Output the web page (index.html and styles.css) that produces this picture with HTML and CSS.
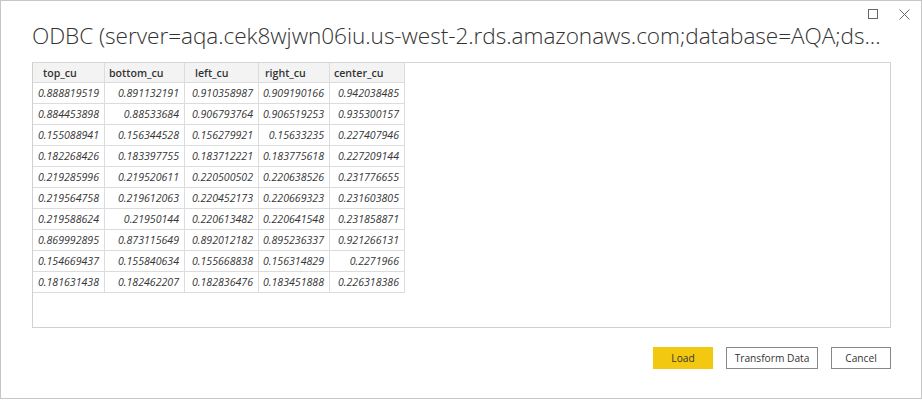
FILE: index.html
```html
<!DOCTYPE html>
<html lang="en">
<head>
<meta charset="utf-8">
<title>ODBC</title>
<link rel="stylesheet" href="styles.css">
</head>
<body>
<div class="dialog">
  <div class="controls">
    <svg class="ctl" width="10" height="10" viewBox="0 0 10 10"><rect x="0.5" y="0.5" width="9" height="9" fill="none" stroke="#666" stroke-width="1"/></svg>
    <svg class="ctl" width="11" height="11" viewBox="0 0 11 11"><path d="M0.5 0.5 L10.5 10.5 M10.5 0.5 L0.5 10.5" stroke="#666" stroke-width="1" fill="none"/></svg>
  </div>
  <div class="title">ODBC (server=aqa.cek8wjwn06iu.us-west-2.rds.amazonaws.com;database=AQA;ds...</div>
  <div class="preview">
    <div class="grid">
      <div class="th p1">top_cu</div>
      <div class="th p2">bottom_cu</div>
      <div class="th p3">left_cu</div>
      <div class="th p4">right_cu</div>
      <div class="th p5">center_cu</div>

      <div class="td">0.888819519</div><div class="td">0.891132191</div><div class="td">0.910358987</div><div class="td">0.909190166</div><div class="td">0.942038485</div>
      <div class="td">0.884453898</div><div class="td">0.88533684</div><div class="td">0.906793764</div><div class="td">0.906519253</div><div class="td">0.935300157</div>
      <div class="td">0.155088941</div><div class="td">0.156344528</div><div class="td">0.156279921</div><div class="td">0.15633235</div><div class="td">0.227407946</div>
      <div class="td">0.182268426</div><div class="td">0.183397755</div><div class="td">0.183712221</div><div class="td">0.183775618</div><div class="td">0.227209144</div>
      <div class="td">0.219285996</div><div class="td">0.219520611</div><div class="td">0.220500502</div><div class="td">0.220638526</div><div class="td">0.231776655</div>
      <div class="td">0.219564758</div><div class="td">0.219612063</div><div class="td">0.220452173</div><div class="td">0.220669323</div><div class="td">0.231603805</div>
      <div class="td">0.219588624</div><div class="td">0.21950144</div><div class="td">0.220613482</div><div class="td">0.220641548</div><div class="td">0.231858871</div>
      <div class="td">0.869992895</div><div class="td">0.873115649</div><div class="td">0.892012182</div><div class="td">0.895236337</div><div class="td">0.921266131</div>
      <div class="td">0.154669437</div><div class="td">0.155840634</div><div class="td">0.155668838</div><div class="td">0.156314829</div><div class="td">0.2271966</div>
      <div class="td">0.181631438</div><div class="td">0.182462207</div><div class="td">0.182836476</div><div class="td">0.183451888</div><div class="td">0.226318386</div>
    </div>
  </div>
  <div class="footer">
    <button class="btn primary">Load</button>
    <button class="btn">Transform Data</button>
    <button class="btn">Cancel</button>
  </div>
</div>
</body>
</html>
```

FILE: styles.css
```css
* { box-sizing: border-box; }
html, body { margin: 0; padding: 0; background: #fff; }
body { font-family: "Open Sans", "Noto Sans", sans-serif; }

.dialog {
  width: 922px;
  height: 399px;
  border: 1px solid #c6c6c6;
  background: #fff;
  display: flex;
  flex-direction: column;
}

.controls {
  display: flex;
  justify-content: flex-end;
  align-items: flex-start;
  gap: 21px;
  padding: 8px 11px 0 0;
  height: 19px;
}
.ctl { display: block; }

.title {
  margin: 1px 0 0 31px;
  font-size: 22.6px;
  font-weight: 300;
  color: #333;
  line-height: 30px;
  height: 30px;
  white-space: nowrap;
  letter-spacing: -0.05px;
}

.preview {
  margin: 11px 30px 0 31px;
  height: 266px;
  border: 1px solid #d0d0d0;
  border-top-color: #d6d6d6;
}

.grid {
  display: grid;
  grid-template-columns: 72px 80px 74px 71px 75px;
  width: 372px;
}

.th, .td {
  height: 21px;
  border-right: 1px solid #dcdcdc;
  border-bottom: 1px solid #dcdcdc;
  display: flex;
  align-items: center;
  white-space: nowrap;
  font-size: 10.6px;
}

.th {
  height: 20px;
  background: #f3f3f3;
  font-weight: 600;
  color: #333;
}
.p1 { padding-left: 10px; }
.p2 { padding-left: 4px; }
.p3 { padding-left: 10px; }
.p4 { padding-left: 6px; }
.p5 { padding-left: 4px; }

.td {
  justify-content: flex-end;
  padding-right: 5px;
  font-style: italic;
  color: #363636;
}

.footer {
  display: flex;
  justify-content: flex-end;
  gap: 13px;
  margin: 19px 30px 0 0;
}

.btn {
  height: 22px;
  padding: 0;
  border: 1px solid #8a8886;
  background: #fff;
  font-family: "Open Sans", "Noto Sans", sans-serif;
  font-size: 10.2px;
  color: #333;
  width: 60px;
}
.btn:nth-child(2) { width: 92px; }
.btn.primary {
  background: #f2c811;
  border-color: #f2c811;
  color: #333;
}
```
